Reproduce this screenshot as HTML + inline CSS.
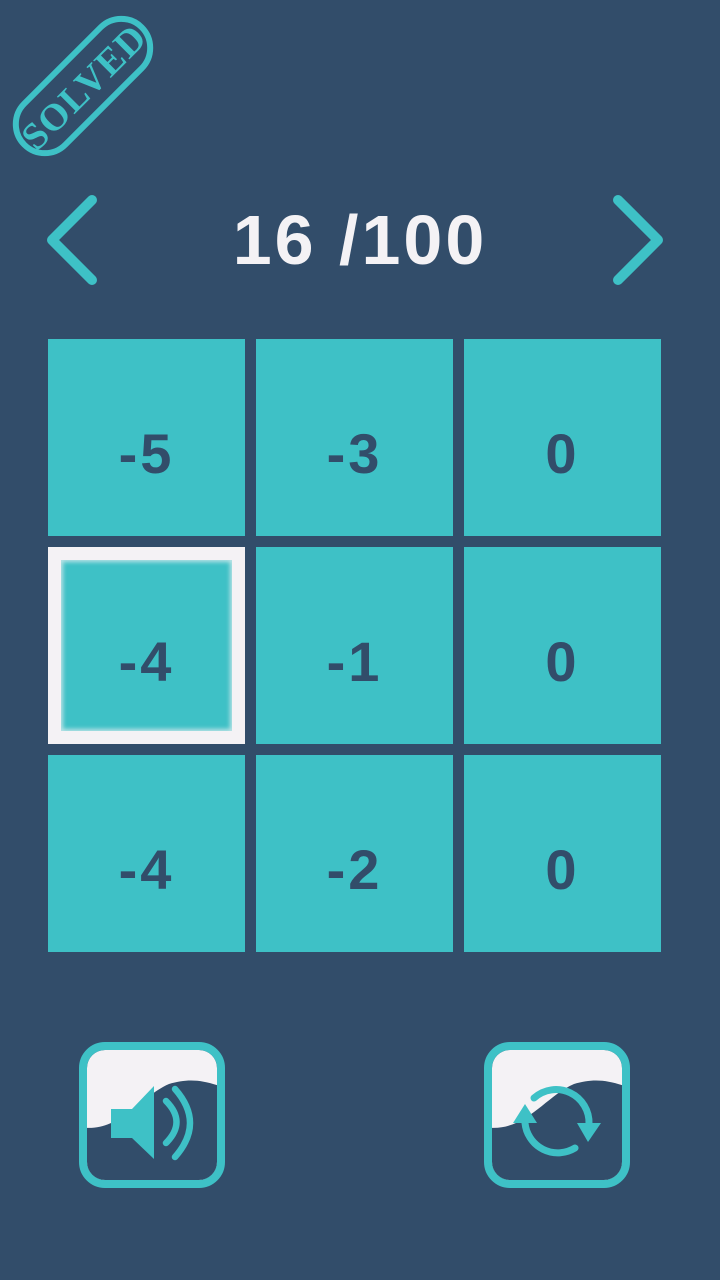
<!DOCTYPE html>
<html><head><meta charset="utf-8"><style>
html,body{margin:0;padding:0}
body{width:720px;height:1280px;background:#324d6a;position:relative;overflow:hidden;font-family:"Liberation Sans","DejaVu Sans",sans-serif}
.title{position:absolute;left:0;width:720px;top:200px;text-align:center;color:#f4f2f5;font-weight:bold;font-size:70px;line-height:80px;letter-spacing:3px}
.cell{position:absolute;width:197px;height:197px;background:#3ec1c6;color:#324d6a;font-weight:bold;font-size:56px;display:flex;align-items:center;justify-content:center;letter-spacing:3px;box-sizing:border-box;padding-top:32px}
.sel{border:13px solid #f4f2f5;box-shadow:inset 0 0 4px 2px rgba(244,242,245,.7);padding-top:31px}
svg{position:absolute}
</style></head><body>
<svg width="180" height="180" style="left:0;top:0">
 <g transform="rotate(-45 83 86)">
  <rect x="0" y="57" width="166" height="58" rx="29" fill="none" stroke="#3ec1c6" stroke-width="6"/>
  <text x="83" y="100" text-anchor="middle" font-family="Liberation Serif,serif" font-weight="bold" font-size="38" fill="#3ec1c6" letter-spacing="1">SOLVED</text>
 </g>
</svg>
<svg width="720" height="100" style="left:0;top:190px">
 <polyline points="92,10 52,50 92,90" fill="none" stroke="#3ec1c6" stroke-width="10" stroke-linecap="round" stroke-linejoin="round"/>
 <polyline points="618,10 658,50 618,90" fill="none" stroke="#3ec1c6" stroke-width="10" stroke-linecap="round" stroke-linejoin="round"/>
</svg>
<div class="title">16 /100</div>
<div class="cell" style="left:48px;top:339px">-5</div>
<div class="cell" style="left:256px;top:339px">-3</div>
<div class="cell" style="left:464px;top:339px">0</div>
<div class="cell sel" style="left:48px;top:547px">-4</div>
<div class="cell" style="left:256px;top:547px">-1</div>
<div class="cell" style="left:464px;top:547px">0</div>
<div class="cell" style="left:48px;top:755px">-4</div>
<div class="cell" style="left:256px;top:755px">-2</div>
<div class="cell" style="left:464px;top:755px">0</div>

<svg width="146" height="146" style="left:79px;top:1042px">
 <clipPath id="c1"><rect x="8" y="8" width="130" height="130" rx="18"/></clipPath>
 <g clip-path="url(#c1)">
  <rect x="0" y="0" width="146" height="146" fill="#f4f2f5"/>
  <path d="M0,85 C40,92 60,55 90,42 C110,36 125,38 146,46 L146,146 L0,146 Z" fill="#324d6a"/>
 </g>
 <rect x="4" y="4" width="138" height="138" rx="22" fill="none" stroke="#3ec1c6" stroke-width="8"/>
 <path d="M32,67 H53 L75,44 V117 L53,96 H32 Z" fill="#3ec1c6"/>
 <path d="M87,59 Q108,80 87,101" fill="none" stroke="#3ec1c6" stroke-width="6.5" stroke-linecap="round"/>
 <path d="M96,47 Q126,81 96,115" fill="none" stroke="#3ec1c6" stroke-width="6.5" stroke-linecap="round"/>
</svg>
<svg width="146" height="146" style="left:484px;top:1042px">
 <clipPath id="c2"><rect x="8" y="8" width="130" height="130" rx="18"/></clipPath>
 <g clip-path="url(#c2)">
  <rect x="0" y="0" width="146" height="146" fill="#f4f2f5"/>
  <path d="M0,85 C40,92 60,55 90,42 C110,36 125,38 146,46 L146,146 L0,146 Z" fill="#324d6a"/>
 </g>
 <rect x="4" y="4" width="138" height="138" rx="22" fill="none" stroke="#3ec1c6" stroke-width="8"/>
 <path d="M50,56 A33,33 0 0 1 105,82" fill="none" stroke="#3ec1c6" stroke-width="7" stroke-linecap="round"/>
 <path d="M41,81 A33,33 0 0 0 91,106" fill="none" stroke="#3ec1c6" stroke-width="7" stroke-linecap="round"/>
 <path d="M93,81 H117 L104,100 Z" fill="#3ec1c6"/>
 <path d="M29,81 H53 L41,62 Z" fill="#3ec1c6"/>
</svg>
</body></html>
